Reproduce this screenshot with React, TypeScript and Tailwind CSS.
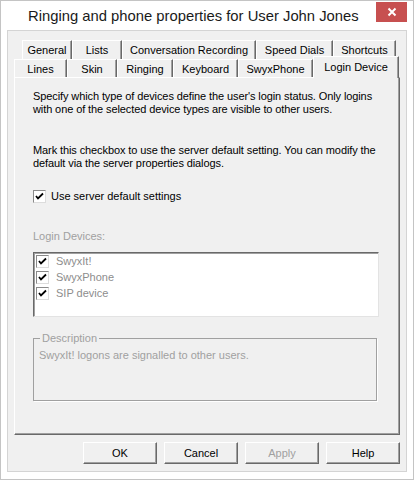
import type { ReactNode } from 'react';

const backTabs = [
  { label: 'General', w: 'w-[50px]' },
  { label: 'Lists', w: 'w-[50px]' },
  { label: 'Conversation Recording', w: 'w-[134px]' },
  { label: 'Speed Dials', w: 'w-[77px]' },
  { label: 'Shortcuts', w: 'w-[63px]' },
];

const frontTabs = [
  { label: 'Lines', w: 'w-[53px]' },
  { label: 'Skin', w: 'w-[50px]' },
  { label: 'Ringing', w: 'w-[56px]' },
  { label: 'Keyboard', w: 'w-[65px]' },
  { label: 'SwyxPhone', w: 'w-[75px]' },
];

const devices = ['SwyxIt!', 'SwyxPhone', 'SIP device'];

const Check = () => (
  <span className="flex h-[13px] w-[13px] shrink-0 items-center justify-center border border-t-[#8a8a8a] border-l-[#8a8a8a] border-r-[#dcdcdc] border-b-[#dcdcdc] bg-white">
    <svg width="11" height="11" viewBox="0 0 11 11">
      <path d="M2 5 L4 7.5 L9 2.5" fill="none" stroke="#000" strokeWidth="1.8" />
    </svg>
  </span>
);

const Button = ({ children, disabled = false }: { children: ReactNode; disabled?: boolean }) => (
  <button
    className={`h-[22px] w-[74px] border border-t-white border-l-white border-r-[#696969] border-b-[#696969] bg-[#f0f0f0] text-[11px] shadow-[inset_-1px_-1px_0_#a0a0a0] ${
      disabled ? 'text-[#a0a0a0]' : 'text-black'
    }`}
  >
    {children}
  </button>
);

const App = () => {
  return (
    <div className="flex h-[480px] w-[414px] flex-col border border-[#c4c4c4] bg-white font-['Liberation_Sans',Arial,sans-serif]">
      {/* title bar */}
      <div className="flex h-[29px] shrink-0 items-start">
        <div className="mt-[5px] whitespace-nowrap pl-[27px] text-[14.8px] leading-[20px] text-[#1a1a1a]">
          Ringing and phone properties for User John Jones
        </div>
        <div className="ml-auto mr-[6px] mt-[1px] flex h-[20px] w-[31px] shrink-0 items-center justify-center bg-[#c75050]">
          <svg width="10" height="10" viewBox="0 0 10 10">
            <path d="M1.5 1.5 L8.5 8.5 M8.5 1.5 L1.5 8.5" stroke="#fff" strokeWidth="2" />
          </svg>
        </div>
      </div>

      {/* client area */}
      <div className="mx-[6px] mb-[8px] flex flex-1 flex-col border border-[#d4d4d4] bg-[#f0f0f0] px-[6px] pb-[7px] pt-[9px]">
        <div className="flex flex-col text-[11px]">
          {/* back row of tabs */}
          <div className="flex h-[19px] pl-[8px]">
            {backTabs.map((t) => (
              <div
                key={t.label}
                className={`${t.w} flex items-start justify-center border-l border-t border-l-white border-t-white border-r border-r-[#696969] pt-[2px] leading-[14px] shadow-[inset_-1px_0_0_#a0a0a0]`}
              >
                {t.label}
              </div>
            ))}
          </div>
          {/* front row of tabs */}
          <div className="relative flex h-[18px]">
            {frontTabs.map((t) => (
              <div
                key={t.label}
                className={`${t.w} flex items-start justify-center border-l border-t border-l-white border-t-white border-r border-r-[#696969] pt-[2px] leading-[14px] shadow-[inset_-1px_0_0_#a0a0a0]`}
              >
                {t.label}
              </div>
            ))}
            <div className="relative z-10 -mt-[3px] flex h-[22px] w-[86px] items-start justify-center border-l border-t border-l-white border-t-white border-r border-r-[#696969] bg-[#f0f0f0] pt-[3px] leading-[14px] shadow-[inset_-1px_0_0_#a0a0a0]">
              Login Device
            </div>
          </div>

          {/* panel */}
          <div className="flex h-[358px] flex-col border border-l-white border-t-white border-r-[#696969] border-b-[#696969] pl-[18px] pr-[12px] pt-[12px] shadow-[inset_-1px_-1px_0_#a0a0a0]">
            <p className="leading-[13px] tracking-[-0.1px]">
              Specify which type of devices define the user's login status. Only logins with one of the selected device types are visible to other users.
            </p>
            <p className="mt-[28px] leading-[13px] tracking-[-0.1px]">
              Mark this checkbox to use the server default setting. You can modify the default via the server properties dialogs.
            </p>
            <label className="mt-[20px] flex h-[13px] items-center gap-[5px] leading-[13px]">
              <Check />
              <span>Use server default settings</span>
            </label>

            <div className="mt-[27px] leading-[13px] text-[#a0a0a0]">Login Devices:</div>

            <div className="mt-[9px] h-[65px] w-[346px] border border-t-[#696969] border-l-[#696969] border-r-[#e3e3e3] border-b-[#e3e3e3] bg-white px-[1px] shadow-[inset_1px_1px_0_#a0a0a0]">
              {devices.map((d) => (
                <div key={d} className="flex h-[16px] items-center gap-[7px] pl-[1px] text-[#8d8d8d]">
                  <Check />
                  <span>{d}</span>
                </div>
              ))}
            </div>

            <fieldset className="mt-[15px] h-[69px] w-[344px] border border-[#a0a0a0] px-[5px] pb-0 pt-0 shadow-[1px_1px_0_#fff]">
              <legend className="ml-[1px] px-[2px] leading-[13px] text-[#a0a0a0]">Description</legend>
              <div className="mt-[4px] leading-[13px] text-[#a0a0a0]">SwyxIt! logons are signalled to other users.</div>
            </fieldset>
          </div>
        </div>

        {/* dialog buttons */}
        <div className="mt-[7px] flex justify-end gap-[7px]">
          <Button>OK</Button>
          <Button>Cancel</Button>
          <Button disabled>Apply</Button>
          <Button>Help</Button>
        </div>
      </div>
    </div>
  );
};

export default App;
